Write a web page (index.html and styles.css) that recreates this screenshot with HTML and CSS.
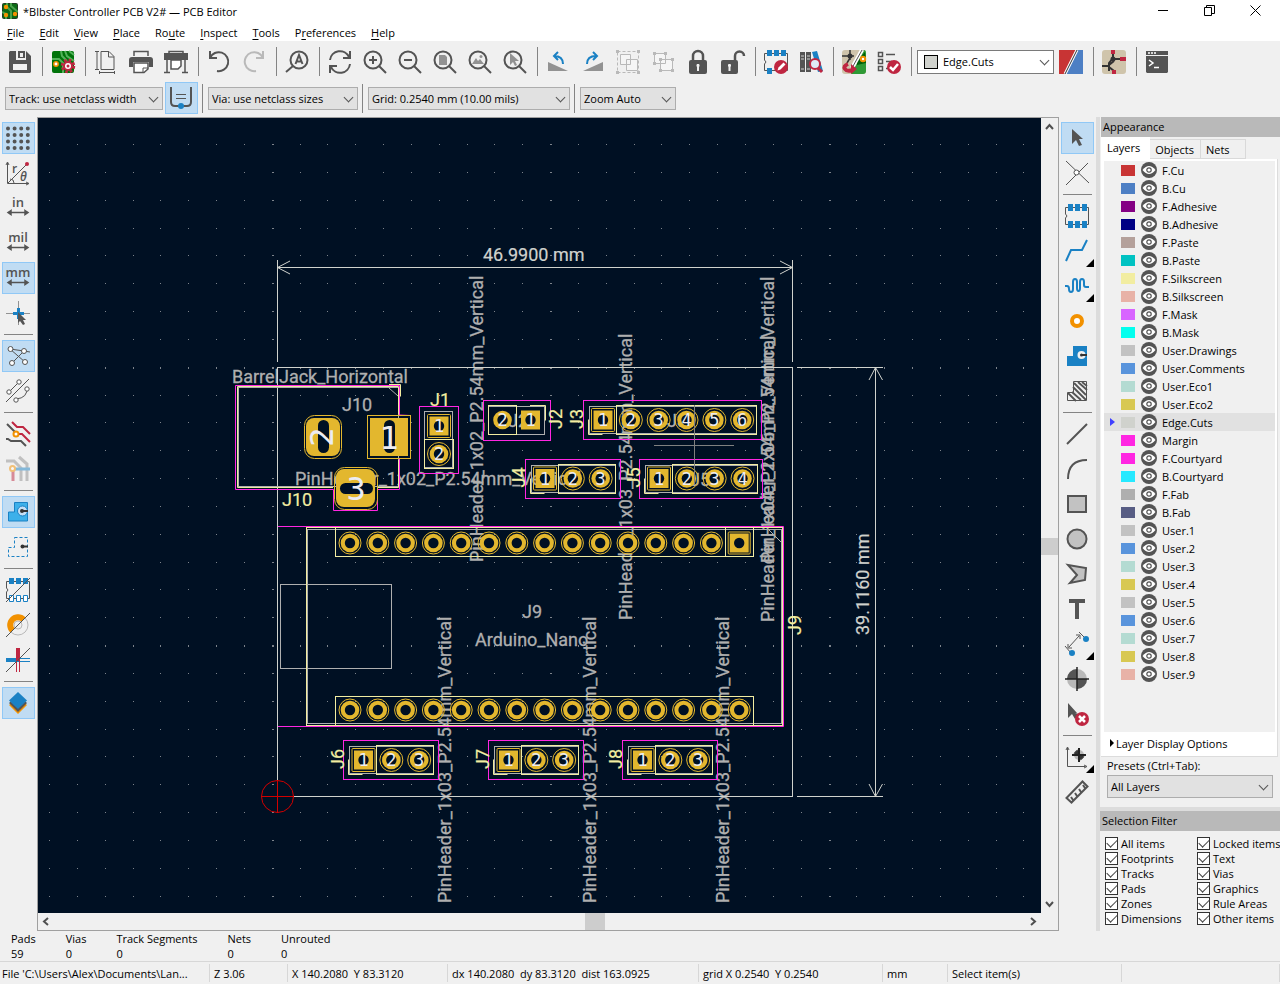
FILE: index.html
```html
<!DOCTYPE html>
<html lang="en">
<head>
  <meta charset="utf-8">
  <title>*Blbster Controller PCB V2# — PCB Editor</title>
  <link rel="stylesheet" href="styles.css">
</head>
<body>
  <header class="titlebar">
    <svg class="app-icon" viewBox="0 0 16 16"><rect width="16" height="16" rx="2" fill="#1f3d22"/><path d="M1 1h14v14H1z" fill="#0b6a14"/><path d="M5 0v4l4 4v8M9 0v3l7 6M0 9l4 2v5" fill="none" stroke="#49a24c" stroke-width="2"/><circle cx="4" cy="4" r="2.2" fill="#f29100"/><circle cx="4" cy="12" r="2.2" fill="#f29100"/><circle cx="13" cy="11" r="2.2" fill="#f29100"/></svg>
    <span class="title">*Blbster Controller PCB V2# — PCB Editor</span>
    <button class="win-btn" aria-label="Minimize"><svg width="11" height="11"><path d="M0 5.500h10" stroke="#000"/></svg></button>
    <button class="win-btn" aria-label="Restore"><svg width="11" height="11" fill="none" stroke="#000"><path d="M.5 2.500h7v8h-7zM2.500 2.500v-2h8v8h-3"/></svg></button>
    <button class="win-btn" aria-label="Close"><svg width="11" height="11" stroke="#000"><path d="M.5.5l10 10M10.500.5l-10 10"/></svg></button>
  </header>

  <nav class="menubar">
    <button><u>F</u>ile</button><button><u>E</u>dit</button><button><u>V</u>iew</button><button><u>P</u>lace</button><button>Ro<u>u</u>te</button><button><u>I</u>nspect</button><button><u>T</u>ools</button><button>P<u>r</u>eferences</button><button><u>H</u>elp</button>
  </nav>

  <div class="toolbar">
    <button class="tool" aria-label="Save"><svg viewBox="0 0 24 24"><path d="M2 1h16l5 5v16l-1 1H2l-1-1V2z" fill="#545454"/><path d="M8 1h10v9H8z" fill="#f0f0f0"/><path d="M10 1h7v7h-7z" fill="#545454"/><path d="M12 3h3v4h-3zM5 14h14v6H5z" fill="#f0f0f0"/></svg></button>
    <span class="sep"></span>
    <button class="tool" aria-label="Board setup"><svg viewBox="0 0 24 24"><rect x="1" y="1" width="22" height="22" rx="2" fill="#00730a"/><path d="M10 1l1 5 5 5M14 1l2 5 7 5M1 9h7l4 4v10M18 1l5 4" fill="none" stroke="#52b35a" stroke-width="2"/><circle cx="5" cy="14" r="2.200" fill="#fff" stroke="#f29100" stroke-width="1.500"/><circle cx="17" cy="16" r="6" fill="none" stroke="#bf2641" stroke-width="2.500" stroke-dasharray="2.700 2"/><circle cx="17" cy="16" r="3.600" fill="#fff" stroke="#bf2641" stroke-width="3"/><circle cx="17" cy="16" r="3" fill="#fff"/><circle cx="17" cy="16" r="1.500" fill="#bf2641"/></svg></button>
    <span class="sep"></span>
    <button class="tool" aria-label="Page settings"><svg viewBox="0 0 24 24" class="line"><path d="M7 1.500h8l5 5v13H7zM14.500 1.500v5.500h5.500M3 2v18M1 1.500h4M1 19.500h4M6 22.500h14M5.500 21v3M20.500 21v3"/></svg></button>
    <button class="tool" aria-label="Print"><svg viewBox="0 0 24 24"><path d="M5 6V1.500h14V6" fill="none" stroke="#545454" stroke-width="1.500"/><path d="M3 7h18q3 0 3 3v7h-4v-5H4v5H0v-7q0-3 3-3z" fill="#545454"/><path d="M5 13h14v6l-4 3.500H5z" fill="#fff" stroke="#545454" stroke-width="1.500"/><path d="M14 22v-4h5" fill="none" stroke="#545454"/></svg></button>
    <button class="tool" aria-label="Plot"><svg viewBox="0 0 24 24"><path d="M5 4V1.500h14V4" fill="none" stroke="#545454" stroke-width="1.500"/><path d="M0 3h24v7H0z" fill="#545454"/><path d="M7 10h10v6l-3 3H7z" fill="#fff" stroke="#545454" stroke-width="1.500"/><path d="M3 10v13M21 10v13M0 22.500h6M18 22.500h6" stroke="#545454" stroke-width="1.500"/></svg></button>
    <span class="sep"></span>
    <button class="tool" aria-label="Undo"><svg viewBox="0 0 24 24" class="bold"><path d="M3 1v7h7M3 8A9.500 9.500 0 1 1 10 21"/></svg></button>
    <button class="tool off" aria-label="Redo"><svg viewBox="0 0 24 24" class="bold"><path d="M21 1v7h-7M21 8A9.500 9.500 0 1 0 14 21"/></svg></button>
    <span class="sep"></span>
    <button class="tool" aria-label="Find"><svg viewBox="0 0 24 24" class="bold"><circle cx="14" cy="10" r="8.500"/><path d="M8 16l-7 6"/><path d="M10.500 14l3.500-9 3.500 9M12 11.500h4"/></svg></button>
    <span class="sep"></span>
    <button class="tool" aria-label="Refresh"><svg viewBox="0 0 24 24" class="bold"><path d="M2 10A10 10 0 0 1 21 7M22 1v7h-7M22 14A10 10 0 0 1 3 17M2 23v-7h7"/></svg></button>
    <button class="tool" aria-label="Zoom in"><svg viewBox="0 0 24 24" class="bold"><circle cx="10" cy="10" r="8.500"/><path d="M16 16l7 7M6 10h8M10 6v8"/></svg></button>
    <button class="tool" aria-label="Zoom out"><svg viewBox="0 0 24 24" class="bold"><circle cx="10" cy="10" r="8.500"/><path d="M16 16l7 7M6 10h8"/></svg></button>
    <button class="tool" aria-label="Zoom to page"><svg viewBox="0 0 24 24" class="bold"><circle cx="10" cy="10" r="8.500"/><path d="M16 16l7 7"/><path d="M6 5h6l2 2v8H6z" fill="#929292" stroke="none"/></svg></button>
    <button class="tool" aria-label="Zoom to objects"><svg viewBox="0 0 24 24" class="bold"><circle cx="10" cy="10" r="8.500"/><path d="M16 16l7 7"/><path d="M4 14l4-6 2 3 2-2 4 5z" fill="#929292" stroke="none"/><circle cx="13" cy="6.500" r="1.500" fill="#929292" stroke="none"/></svg></button>
    <button class="tool" aria-label="Zoom to selection"><svg viewBox="0 0 24 24" class="bold"><circle cx="10" cy="10" r="8.500"/><path d="M16 16l7 7"/><path d="M7 3v12l3-3 2 4 2-1-2-4h4z" fill="#929292" stroke="none"/></svg></button>
    <span class="sep"></span>
    <button class="tool" aria-label="Rotate counterclockwise"><svg viewBox="0 0 24 24"><path d="M2 12v9h20z" fill="#929292"/><path d="M17 14q0-8-9-8M12 2L8 6l4 4" fill="none" stroke="#1a81c4" stroke-width="2"/></svg></button>
    <button class="tool" aria-label="Rotate clockwise"><svg viewBox="0 0 24 24"><path d="M22 12v9H2z" fill="#929292"/><path d="M6 14q0-8 9-8M12 2l4 4-4 4" fill="none" stroke="#1a81c4" stroke-width="2"/></svg></button>
    <button class="tool off" aria-label="Group"><svg viewBox="0 0 24 24" class="line"><path d="M1.500 1.500h21v21h-21z" stroke-dasharray="3 2"/><path d="M4.500 4.500h10v10h-10zM10.500 9.500h11v11h-11z" fill="#fff"/><path d="M0 0h3v3H0zM21 0h3v3h-3zM0 21h3v3H0zM21 21h3v3h-3z" fill="#545454" stroke="none"/></svg></button>
    <button class="tool off" aria-label="Ungroup"><svg viewBox="0 0 24 24" class="line"><path d="M3.500 3.500h11v10h-11zM9.500 9.500h12v11h-12z" fill="#fff"/><path d="M2 2h3v3H2zM13 2h3v3h-3zM2 12h3v3H2zM8 8h3v3H8zM20 8h3v3h-3zM8 19h3v3H8zM20 19h3v3h-3z" fill="#545454" stroke="none"/></svg></button>
    <button class="tool" aria-label="Lock"><svg viewBox="0 0 24 24"><path d="M7 12V6a5 5 0 0 1 10 0v6" fill="none" stroke="#545454" stroke-width="2.500"/><rect x="3" y="10" width="18" height="14" rx="2" fill="#545454"/><path d="M12 14v7M10.500 15.500h3" stroke="#f0f0f0" stroke-width="2"/></svg></button>
    <button class="tool" aria-label="Unlock"><svg viewBox="0 0 24 24"><path d="M14 12V6a4.500 4.500 0 0 1 9 0" fill="none" stroke="#545454" stroke-width="2.500"/><rect x="0" y="10" width="17" height="14" rx="2" fill="#545454"/><path d="M8.500 14v7M7 15.500h3" stroke="#f0f0f0" stroke-width="2"/></svg></button>
    <span class="sep"></span>
    <button class="tool" aria-label="Footprint editor"><svg viewBox="0 0 24 24"><path d="M.5 3.500h23v17H.500V14q3-2 0-4z" fill="none" stroke="#545454"/><path d="M3 0h5v6H3zM10 0h5v6h-5zM17 0h5v6h-5zM3 18h5v6H3z" fill="#1a81c4"/><circle cx="17" cy="17" r="7" fill="#bf2641"/><path d="M13.500 20.500l1-3 5-5 2 2-5 5z" fill="#fff"/></svg></button>
    <button class="tool" aria-label="Footprint library"><svg viewBox="0 0 24 24"><path d="M1 2h5v20H1zM7 2h5v20H7z" fill="#545454"/><path d="M2 6h3M2 9h3M8 6h3M8 9h3M2 19h3M8 19h3" stroke="#d0d0d0"/><path d="M13 2l5-1 6 20-5 1z" fill="#1a81c4"/><circle cx="16" cy="14" r="5" fill="#dfeaf5" stroke="#bf2641" stroke-width="2"/><path d="M19 18l4 4" stroke="#bf2641" stroke-width="3"/></svg></button>
    <span class="sep"></span>
    <button class="tool" aria-label="Update PCB from schematic"><svg viewBox="0 0 24 24"><rect width="24" height="24" rx="3" fill="#cfc4ab"/><path d="M22 0L9 24h12q3 0 3-3V3q0-3-2-3z" fill="#2f9a36"/><path d="M23 2l-8 9v4l9-2z" fill="#00600a"/><path d="M20 0L10 18" stroke="#fff" stroke-width="4"/><path d="M20 0L10 18" stroke="#545454"/><path d="M8 0v10M0 6h12M8 8l-3 5" fill="none" stroke="#333" stroke-width="1.500"/><circle cx="8" cy="6" r="2.500" fill="#333"/><circle cx="21" cy="9" r="2.200" fill="#fff" stroke="#f29100" stroke-width="2"/><path d="M6 14q-5 2-3 5t8 1" fill="none" stroke="#bf2641" stroke-width="4"/><path d="M9 14l6 5-6 5z" fill="#bf2641"/></svg></button>
    <button class="tool" aria-label="Design rules checker"><svg viewBox="0 0 24 24"><path d="M1.500 2.500h4v4h-4zM1.500 9.500h4v4h-4zM1.500 16.500h4v4h-4zM9 4.500h9M9 11.500h6M9 18.500h3" fill="none" stroke="#545454" stroke-width="1.500"/><circle cx="17" cy="17" r="7" fill="#bf2641"/><path d="M13 17l3 3 5-6" fill="none" stroke="#fff" stroke-width="2.500"/></svg></button>
    <span class="sep"></span>
    <span class="select layer-select">
      <i class="current-layer"></i>
      <select aria-label="Active layer"><option>Edge.Cuts</option></select>
    </span>
    <button class="tool" aria-label="Layer pair"><svg viewBox="0 0 24 24"><path d="M0 0h24v24H0z" fill="#4d7fc4"/><path d="M0 0h18L6 24H0z" fill="#c83434"/><path d="M18 0L6 24" stroke="#fff" stroke-width="3"/><path d="M18 0L6 24" stroke="#333"/></svg></button>
    <span class="sep"></span>
    <button class="tool" aria-label="Schematic editor"><svg viewBox="0 0 24 24"><rect width="24" height="24" rx="3" fill="#cfc4ab"/><path d="M11 0v8l-4 5v8M11 9h8M0 16h7M7 15l5-4M7 17l5 4v3" fill="none" stroke="#333" stroke-width="2"/><path d="M9 0h4v4H9zM18 7h6v4h-6zM10 20h4v4h-4z" fill="#bf2641"/><circle cx="11" cy="9" r="2.500" fill="#333"/></svg></button>
    <span class="sep"></span>
    <button class="tool" aria-label="Scripting console"><svg viewBox="0 0 24 24"><path d="M1 1h22v4H1zM1 6h22v16l-1 1H2l-1-1z" fill="#545454"/><path d="M3 3h2M6 3h2M9 3h2M4 10l4 3-4 3M9 17.500h5" fill="none" stroke="#fff" stroke-width="1.500"/></svg></button>
  </div>

  <div class="toolbar options">
    <span class="select track"><select aria-label="Track width"><option>Track: use netclass width</option></select></span>
    <button class="tool on" aria-label="Use existing track width"><svg viewBox="0 0 24 24"><path d="M2 1v15q0 4 4 4h12q4 0 4-4V1" fill="none" stroke="#545454" stroke-width="2"/><path d="M7 8.500h10M7 12.500h10" stroke="#545454"/><circle cx="12" cy="20" r="3" fill="#1a81c4"/></svg></button>
    <span class="sep"></span>
    <span class="select via"><select aria-label="Via size"><option>Via: use netclass sizes</option></select></span>
    <span class="sep"></span>
    <span class="select grid"><select aria-label="Grid"><option>Grid: 0.2540 mm (10.00 mils)</option></select></span>
    <span class="sep"></span>
    <span class="select zoom"><select aria-label="Zoom"><option>Zoom Auto</option></select></span>
  </div>

  <main class="workspace">
    <div class="side-tools">
      <button class="tool on" aria-label="Show grid"><svg viewBox="0 0 24 24"><path d="M2 2.500h21M2 9h21M2 15.500h21M2 22h21" stroke="#545454" stroke-width="4" stroke-linecap="round" stroke-dasharray="0 6.600"/></svg></button>
      <button class="tool" aria-label="Polar coordinates"><svg viewBox="0 0 24 24" class="line"><path d="M1.500 2v20.500h21M0 4l1.500-3L3 4M20 21l3 1.500-3 1.500M2 22L20 4M4 18q4 0 4 4"/><circle cx="21" cy="3" r="2" fill="#bf2641" stroke="none"/><text x="6" y="12" class="glyph">r</text><text x="14" y="20" class="glyph italic">θ</text></svg></button>
      <button class="tool" aria-label="Inches"><svg viewBox="0 0 24 24"><text x="12" y="11" class="unit">in</text><path d="M3 16.500h18M5 14.500l-3 2 3 2zM19 14.500l3 2-3 2z" stroke="#545454" stroke-width="1.500" fill="#545454"/></svg></button>
      <button class="tool" aria-label="Mils"><svg viewBox="0 0 24 24"><text x="12" y="11" class="unit">mil</text><path d="M3 16.500h18M5 14.500l-3 2 3 2zM19 14.500l3 2-3 2z" stroke="#545454" stroke-width="1.500" fill="#545454"/></svg></button>
      <button class="tool on" aria-label="Millimeters"><svg viewBox="0 0 24 24"><text x="12" y="11" class="unit">mm</text><path d="M3 16.500h18M5 14.500l-3 2 3 2zM19 14.500l3 2-3 2z" stroke="#545454" stroke-width="1.500" fill="#545454"/></svg></button>
      <button class="tool" aria-label="Full-window crosshair"><svg viewBox="0 0 24 24"><path d="M0 12.500h24M12.500 0v24" stroke="#929292"/><path d="M12.500 7v11M7 12.500h11" stroke="#1a81c4" stroke-width="3"/><path d="M12 11v11l2-2 3 4 2-1-2-4h3z" fill="#545454"/></svg></button>
      <span class="sep"></span>
      <button class="tool on" aria-label="Show ratsnest"><svg viewBox="0 0 24 24" class="line"><path d="M4 5l14 2 6 1M4 5l15 13M6 19L18 7"/><g fill="#fff"><circle cx="4.500" cy="5" r="2.500"/><circle cx="18" cy="7" r="2.500"/><circle cx="6" cy="19" r="2.500"/><circle cx="19" cy="18" r="2.500"/></g></svg></button>
      <button class="tool" aria-label="Curved ratsnest"><svg viewBox="0 0 24 24" class="line"><path d="M0 23L23 0M3 13l10-10M10 20q12-1 11-12"/><g fill="#fff"><circle cx="3" cy="13" r="2.200"/><circle cx="13" cy="3" r="2.200"/><circle cx="10" cy="21" r="2.200"/><circle cx="21" cy="10" r="2.200"/></g></svg></button>
      <span class="sep"></span>
      <button class="tool" aria-label="Net highlighting"><svg viewBox="0 0 24 24" fill="none" stroke-width="2"><path d="M1 2l8 8M0 17l2 0 3 2h10l5 5" stroke="#545454"/><path d="M6 0l5 5h6l7 7M12 12h4l8 8" stroke="#bf2641"/><circle cx="10" cy="12" r="2.500" fill="#fff" stroke="#f29100"/></svg></button>
      <button class="tool faded" aria-label="Dim inactive nets"><svg viewBox="0 0 24 24" fill="none" stroke-width="3"><path d="M0 4h8l7 7v13M13 0l8 7v17" stroke="#929292"/><path d="M7 12v12" stroke="#bf2641"/><path d="M8 12h16" stroke="#1a81c4"/><circle cx="6.500" cy="11.500" r="2.500" fill="#fff" stroke="#f29100" stroke-width="2"/></svg></button>
      <span class="sep"></span>
      <button class="tool on" aria-label="Show zone fills"><svg viewBox="0 0 24 24"><path d="M8.500 2.500h13v18.500h-19v-9h6z" fill="#3db0ea" stroke="#1a81c4"/><circle cx="16.500" cy="11" r="5" fill="#c4def5" stroke="#1a81c4"/><path d="M16 11h6" stroke="#333" stroke-width="2"/><circle cx="16" cy="11" r="2" fill="#333"/></svg></button>
      <button class="tool" aria-label="Show zone outlines"><svg viewBox="0 0 24 24"><path d="M8.500 2.500h13v19h-19v-9h6z" fill="none" stroke="#1a81c4" stroke-dasharray="3 2"/><path d="M16 11.500h6" stroke="#333" stroke-width="2"/><circle cx="16.500" cy="11.500" r="2" fill="#333"/></svg></button>
      <span class="sep"></span>
      <button class="tool" aria-label="Pads outline mode"><svg viewBox="0 0 24 24"><path d="M.5 3.500h23v17H.500V14q3-2 0-4z" fill="none" stroke="#545454"/><path d="M3 0h5v6H3zM10 0h5v6h-5zM17 0h5v6h-5z" fill="#1a81c4"/><path d="M3.500 17.500h4v6h-4zM10.500 17.500h4v6h-4zM17.500 17.500h4v6h-4z" fill="#fff" stroke="#1a81c4"/><path d="M0 24L24 0" stroke="#545454"/></svg></button>
      <button class="tool" aria-label="Vias outline mode"><svg viewBox="0 0 24 24" fill="none"><circle cx="12" cy="12" r="10" stroke="#b9b9b9"/><circle cx="12" cy="12" r="4" stroke="#b9b9b9"/><path d="M6.500 17.500A7.500 7.500 0 0 1 17.500 6.500" stroke="#f29100" stroke-width="6"/><path d="M0 24L24 0" stroke="#545454"/></svg></button>
      <button class="tool" aria-label="Tracks outline mode"><svg viewBox="0 0 24 24"><path d="M0 12h13" stroke="#1a81c4" stroke-width="4"/><path d="M13 10.500h11M13 13.500h11" stroke="#1a81c4"/><path d="M12 0v13" stroke="#bf2641" stroke-width="4"/><path d="M10.500 13v11M13.500 13v11" stroke="#bf2641"/><path d="M0 24L24 0" stroke="#545454"/></svg></button>
      <span class="sep"></span>
      <button class="tool on" aria-label="Layers manager"><svg viewBox="0 0 24 24"><path d="M3 14l9 9 9-9-9-7z" fill="#f29100"/><path d="M3 12l9 9 9-9-9-8z" fill="#545454"/><path d="M3 9.500L12 1l9 8.500L12 18z" fill="#1a81c4"/></svg></button>
    </div>

    <section class="viewport">
      <svg id="board" class="board" role="img" aria-label="PCB layout"></svg>
      <div class="scroll vertical">
        <svg viewBox="0 0 17 17"><path d="M5 11l3.500-4L12 11"/></svg>
        <span class="before"></span><span class="thumb"></span><span class="after"></span>
        <svg viewBox="0 0 17 17"><path d="M5 6l3.500 4L12 6"/></svg>
      </div>
      <div class="scroll horizontal">
        <svg viewBox="0 0 17 17"><path d="M10 5L6 8.500l4 3.500"/></svg>
        <span class="before"></span><span class="thumb"></span><span class="after"></span>
        <svg viewBox="0 0 17 17"><path d="M7 5l4 3.500L7 12"/></svg>
      </div>
    </section>

    <div class="side-tools right">
      <button class="tool on" aria-label="Select"><svg viewBox="0 0 24 24"><path d="M7 3v15l4-4 3 6 3-1-3-6h4z" fill="#545454"/></svg></button>
      <button class="tool" aria-label="Local ratsnest"><svg viewBox="0 0 24 24" class="line"><path d="M1 0l23 22M23 2L1 24"/><circle cx="11.500" cy="11.500" r="2.500" fill="#fff"/></svg></button>
      <span class="sep"></span>
      <button class="tool" aria-label="Add footprint"><svg viewBox="0 0 24 24"><path d="M.5 3.500h23v17H.500V14q3-2 0-4z" fill="none" stroke="#545454"/><path d="M3 0h5v7H3zM10 0h5v7h-5zM17 0h5v7h-5zM3 17h5v7H3zM10 17h5v7h-5zM17 17h5v7h-5z" fill="#1a81c4"/></svg></button>
      <button class="tool more" aria-label="Route tracks"><svg viewBox="0 0 24 24"><path d="M1 22l5-11h11l5-10" fill="none" stroke="#1a81c4" stroke-width="2"/></svg></button>
      <button class="tool more" aria-label="Tune length"><svg viewBox="0 0 24 24"><path d="M0 12h2q2 0 2 3t2 3 2-3V8q0-3 2-3t2 3v6q0 3 1.500 3t1.500-3V8q0-3 2-3t2 3v3q0 2 2 2h3" fill="none" stroke="#1a81c4" stroke-width="2"/></svg></button>
      <button class="tool" aria-label="Add via"><svg viewBox="0 0 24 24"><circle cx="12" cy="12" r="5" fill="#fff" stroke="#f29100" stroke-width="4"/></svg></button>
      <button class="tool" aria-label="Add filled zone"><svg viewBox="0 0 24 24"><path d="M8 2h14v20H2V12h6z" fill="#1a81c4"/><circle cx="16.500" cy="11" r="4" fill="#f0f0f0"/><path d="M16 11h6" stroke="#333" stroke-width="2"/><circle cx="16.500" cy="11" r="1.500" fill="#333"/></svg></button>
      <button class="tool" aria-label="Add rule area"><svg viewBox="0 0 24 24" class="line"><path d="M8.500 2.500h13v19h-19v-8h6z"/><path d="M9 4l12 12M13 3l9 8M17 3l5 4M8 8l13 13M7 13l9 8M3 14l8 8" stroke-width="1.800"/></svg></button>
      <span class="sep"></span>
      <button class="tool" aria-label="Draw line"><svg viewBox="0 0 24 24" class="bold"><path d="M2 22L22 2"/></svg></button>
      <button class="tool" aria-label="Draw arc"><svg viewBox="0 0 24 24" class="bold"><path d="M3 22Q3 3 22 3"/></svg></button>
      <button class="tool" aria-label="Draw rectangle"><svg viewBox="0 0 24 24" class="bold"><path d="M3 4h18v16H3z" fill="#c2c2c2"/></svg></button>
      <button class="tool" aria-label="Draw circle"><svg viewBox="0 0 24 24" class="bold"><circle cx="12" cy="12" r="9.500" fill="#c2c2c2"/></svg></button>
      <button class="tool" aria-label="Draw polygon"><svg viewBox="0 0 24 24" class="bold"><path d="M3 3l18 3-1 12-15 3 7-8z" fill="#c2c2c2"/></svg></button>
      <button class="tool" aria-label="Add text"><svg viewBox="0 0 24 24"><path d="M4 2h16v4h-6v16h-4V6H4z" fill="#545454"/></svg></button>
      <button class="tool more" aria-label="Add dimension"><svg viewBox="0 0 24 24" class="line"><path d="M4 15L14 4M3 12v4h4M11 3h4v4M0 14l6 7M14 0l7 7"/><circle cx="7" cy="21" r="3" fill="#1a81c4" stroke="none"/><circle cx="21" cy="7" r="3" fill="#1a81c4" stroke="none"/></svg></button>
      <button class="tool" aria-label="Layer alignment target"><svg viewBox="0 0 24 24"><circle cx="12" cy="12" r="10" fill="#b9b9b9"/><path d="M12 12V2A10 10 0 0 0 2 12zM12 2a10 10 0 0 1 0 0zM12 12v10a10 10 0 0 0 10-10z" fill="#545454"/><path d="M12 0v24M0 12h24" stroke="#222" stroke-width="1.500"/></svg></button>
      <button class="tool" aria-label="Delete"><svg viewBox="0 0 24 24"><path d="M3 1v15l4-4 3 5 4-5-4-1h2z" fill="#545454"/><circle cx="17" cy="17" r="7" fill="#bf2641"/><path d="M14 14l6 6M20 14l-6 6" stroke="#fff" stroke-width="2.500"/></svg></button>
      <span class="sep"></span>
      <button class="tool more" aria-label="Set grid origin"><svg viewBox="0 0 24 24" class="line"><path d="M2.500 3v18.500h18M1 5l1.500-3L4 5M19 20l3 1.500-3 1.500"/><circle cx="14" cy="10" r="5" fill="#b9b9b9" stroke="none"/><path d="M14 10V5a5 5 0 0 0-5 5zM14 10v5a5 5 0 0 0 5-5z" fill="#333"/><path d="M14 3v14M7 10h14" stroke="#222" stroke-width="2"/></svg></button>
      <button class="tool" aria-label="Measure"><svg viewBox="0 0 24 24" class="bold"><path d="M1.500 18L17.500 1.500l5 5L6.500 22.500zM8 20l-2-3M12 16l-2-3M16 12l-2-3M20 8l-2-3"/></svg></button>
    </div>

    <aside class="panels">
      <section class="appearance">
        <h2>Appearance</h2>
        <div class="tabs" role="tablist">
          <button role="tab" class="active">Layers</button><button role="tab">Objects</button><button role="tab">Nets</button>
        </div>
        <div class="tab-page">
          <ul id="layers" class="layers"></ul>
          <button class="display-options">Layer Display Options</button>
        </div>
        <div class="presets">
          <label for="preset">Presets (Ctrl+Tab):</label>
          <span class="select"><select id="preset"><option>All Layers</option></select></span>
        </div>
      </section>
      <section class="filter">
        <h2>Selection Filter</h2>
        <div class="filter-items">
          <label><input type="checkbox" checked>All items</label>
          <label><input type="checkbox" checked>Locked items</label>
          <label><input type="checkbox" checked>Footprints</label>
          <label><input type="checkbox" checked>Text</label>
          <label><input type="checkbox" checked>Tracks</label>
          <label><input type="checkbox" checked>Vias</label>
          <label><input type="checkbox" checked>Pads</label>
          <label><input type="checkbox" checked>Graphics</label>
          <label><input type="checkbox" checked>Zones</label>
          <label><input type="checkbox" checked>Rule Areas</label>
          <label><input type="checkbox" checked>Dimensions</label>
          <label><input type="checkbox" checked>Other items</label>
        </div>
      </section>
    </aside>
  </main>

  <dl class="counts">
    <div><dt>Pads</dt><dd>59</dd></div>
    <div><dt>Vias</dt><dd>0</dd></div>
    <div><dt>Track Segments</dt><dd>0</dd></div>
    <div><dt>Nets</dt><dd>0</dd></div>
    <div><dt>Unrouted</dt><dd>0</dd></div>
  </dl>

  <footer class="statusbar">
    <span>File 'C:\Users\Alex\Documents\Lan...</span>
    <span>Z 3.06</span>
    <span>X 140.2080  Y 83.3120</span>
    <span>dx 140.2080  dy 83.3120  dist 163.0925</span>
    <span>grid X 0.2540  Y 0.2540</span>
    <span>mm</span>
    <span>Select item(s)</span>
    <span></span>
  </footer>

  <script src="script.js"></script>
</body>
</html>
```

FILE: styles.css
```css
* {
  box-sizing: border-box;
}
body {
  margin: 0;
  height: 100vh;
  display: flex;
  flex-direction: column;
  overflow: hidden;
  background: #f0f0f0;
  color: #000;
  font: 11px/15px "Open Sans", "Noto Sans", sans-serif;
}
button,
select {
  font: inherit;
  color: inherit;
}
button {
  border: 0;
  padding: 0;
  background: none;
}

/* title bar and menu */
.titlebar {
  display: flex;
  align-items: center;
  height: 24px;
  padding: 0 2px 2px;
  background: #fff;
}
.app-icon {
  width: 16px;
  height: 16px;
}
.title {
  flex: 1;
  padding-left: 5px;
}
.win-btn {
  width: 46px;
  height: 20px;
}
.menubar {
  display: flex;
  gap: 15px;
  height: 17px;
  padding: 0 7px;
  background: #fff;
}
.menubar u {
  text-underline-offset: 2px;
}

/* toolbars */
.toolbar {
  display: flex;
  align-items: center;
  height: 41px;
  padding-left: 3px;
}
.tool {
  position: relative;
  flex: none;
  display: flex;
  align-items: center;
  justify-content: center;
  width: 33px;
  height: 32px;
  margin: 1px;
  padding-right: 1px;
  border: 1px solid transparent;
}
.tool svg {
  width: 24px;
  height: 24px;
  overflow: visible;
}
.tool.on {
  background: #c0dcf3;
  border-color: #90c8f6;
}
.tool.off {
  opacity: 0.35;
}
.tool.faded {
  opacity: 0.5;
}
.tool.more::after {
  content: "";
  position: absolute;
  right: -1px;
  bottom: -1px;
  border: 4px solid #000;
  border-top-color: transparent;
  border-left-color: transparent;
}
.line {
  fill: none;
  stroke: #545454;
}
.bold {
  fill: none;
  stroke: #545454;
  stroke-width: 2;
}
.unit {
  font: 600 13px "Open Sans", sans-serif;
  fill: #545454;
  text-anchor: middle;
}
.glyph {
  font: 600 12px "Open Sans", sans-serif;
  fill: #545454;
  stroke: none;
}
.italic {
  font-style: italic;
}
.sep {
  flex: none;
  width: 8px;
  height: 29px;
  border-left: 1px solid #848484;
  margin-left: 4px;
  margin-right: -4px;
}
.options {
  height: 35px;
  padding: 0 0 3px 5px;
}
.options .tool {
  margin: 0 0 0 2px;
}
.options .sep {
  width: 6px;
  margin-right: 0;
}
.select {
  position: relative;
  display: inline-flex;
  align-items: center;
  height: 23px;
  border: 1px solid #adadad;
  background: #e1e1e1;
}
.select select {
  appearance: none;
  width: 100%;
  height: 100%;
  padding: 0 20px 0 3px;
  border: 0;
  background: none;
}
.select::after {
  content: "";
  position: absolute;
  right: 5px;
  top: 6px;
  width: 6px;
  height: 6px;
  border: solid #555;
  border-width: 0 1px 1px 0;
  transform: rotate(45deg);
  pointer-events: none;
}
.track { width: 158px; }
.via { width: 150px; }
.grid { width: 202px; }
.zoom { width: 96px; }
.layer-select {
  width: 137px;
  height: 24px;
  margin-left: 2px;
  padding-left: 6px;
  border-color: #7a7a7a;
  background: #fff;
}
.layer-select select {
  padding-left: 5px;
}
.current-layer {
  flex: none;
  width: 14px;
  height: 14px;
  border: 1px solid #000;
  background: #d0d2cd;
}

/* workspace */
.workspace {
  flex: 1;
  display: flex;
  min-height: 0;
}
.side-tools {
  display: flex;
  flex-direction: column;
  align-items: center;
  width: 37px;
  padding-top: 3px;
}
.side-tools .tool {
  margin: 2px 0 1px;
}
.side-tools .sep {
  width: 29px;
  height: 8px;
  margin: 4px 0 -4px;
  border-left: 0;
  border-top: 1px solid #848484;
}
.viewport {
  flex: 1;
  display: grid;
  grid-template: minmax(0, 1fr) 17px / minmax(0, 1fr) 17px;
  border: 1px solid #a0a0a0;
}
.board {
  width: 100%;
  height: 100%;
  background: #001023;
}
.scroll {
  display: flex;
}
.scroll svg {
  width: 17px;
  height: 17px;
  fill: none;
  stroke: #505050;
  stroke-width: 2;
}
.vertical {
  flex-direction: column;
}
.thumb {
  flex: none;
  width: 17px;
  height: 17px;
  background: #cdcdcd;
}
.horizontal .thumb {
  width: 20px;
}
.vertical .before { flex: 403; }
.vertical .after { flex: 341; }
.horizontal .before { flex: 530; }
.horizontal .after { flex: 419; }

/* board drawing */
.board text {
  font: 18px Roboto, "DejaVu Sans", sans-serif;
}
.board .fab { fill: none; stroke: #afafaf; }
.board .silk { fill: none; stroke: #f2eda1; }
.board .court { fill: none; stroke: #ff26e2; }
.board .edge { fill: none; stroke: #d0d2cd; }
.board .cursor { stroke: #808080; }
.board .origin { fill: none; stroke: #d20000; }
.board text.fab { fill: #afafaf; stroke: #afafaf; stroke-width: 0.3; }
.board text.silk { fill: #f2eda1; stroke: #f2eda1; stroke-width: 0.2; }
.board text.edge { fill: #d0d2cd; stroke: #d0d2cd; stroke-width: 0.2; }
.board .pad { fill: #e3b72e; }
.board .ring { fill: none; stroke: #e3b72e; }
.board .hole { fill: #001023; }
.board .dot { fill: #7d838b; }
.board text.num {
  font: 17px "DejaVu Sans Mono", monospace;
  fill: #ececf2;
  text-anchor: middle;
}
.board text.big {
  font-size: 32px;
}

/* panels */
.panels {
  width: 184px;
  display: flex;
  flex-direction: column;
  border-left: 4px solid #dcdcdc;
}
.panels h2 {
  margin: 0;
  height: 20px;
  padding: 2px 2px 0;
  background: #b9b9b9;
  font-size: 11px;
  font-weight: normal;
}
.appearance {
  flex: 1;
  display: flex;
  flex-direction: column;
  padding-left: 1px;
  border-bottom: 4px solid #dcdcdc;
}
.tabs {
  display: flex;
  align-items: flex-end;
  height: 22px;
}
.tabs button {
  height: 20px;
  padding: 0 6px 0 5px;
  border: 1px solid #d9d9d9;
  border-left: 0;
}
.tabs .active {
  height: 22px;
  padding: 0 9px 2px 6px;
  border-color: #fff;
  background: #fff;
}
.tabs button:last-child {
  padding-right: 15px;
}
.tab-page {
  flex: 1;
  display: flex;
  flex-direction: column;
  margin-right: 2px;
  padding: 2px 2px 0 3px;
  border-right: 1px solid #dcdcdc;
  border-bottom: 1px solid #dcdcdc;
  background: #fff;
}
.layers {
  flex: 1;
  margin: 0;
  padding: 0;
  list-style: none;
  background: #f0f0f0;
}
.layers li {
  display: flex;
  align-items: center;
  height: 18px;
}
.layers li.current {
  background: #e1e1e1;
}
.marker {
  width: 17px;
  padding-left: 6px;
}
.current .marker::before {
  content: "";
  display: block;
  width: 0;
  border: solid transparent;
  border-width: 4px 0 4px 5px;
  border-left-color: #4040ff;
}
.swatch {
  width: 14px;
  height: 11px;
}
.eye {
  width: 16px;
  height: 16px;
  margin: 0 5px 0 6px;
}
.eye svg {
  display: block;
}
.display-options {
  display: flex;
  align-items: center;
  gap: 2px;
  height: 24px;
  padding: 0 0 2px 6px;
}
.display-options::before {
  content: "";
  border: solid transparent;
  border-width: 4px 0 4px 4px;
  border-left-color: #000;
}
.presets {
  height: 50px;
  padding: 1px 7px 0 6px;
}
.presets label {
  display: block;
  height: 17px;
}
.presets .select {
  width: 100%;
}
.filter {
  height: 120px;
}
.filter-items {
  display: grid;
  grid-template-columns: 92px 1fr;
  padding: 5px 0 0 5px;
}
.filter-items label {
  display: flex;
  align-items: center;
  gap: 3px;
  height: 15px;
  white-space: nowrap;
}
.filter-items input {
  appearance: none;
  flex: none;
  display: grid;
  place-content: center;
  width: 13px;
  height: 13px;
  margin: 0;
  border: 1px solid #333;
  background: #fff;
}
.filter-items input:checked::before {
  content: "";
  width: 9px;
  height: 5px;
  margin-top: -3px;
  border: solid #444;
  border-width: 0 0 1px 1px;
  transform: rotate(-45deg);
}

/* message panel and status bar */
.counts {
  display: flex;
  height: 30px;
  margin: 0;
  padding-left: 11px;
}
.counts div {
  margin-right: 30px;
}
.counts dd {
  margin: 0;
}
.statusbar {
  display: grid;
  grid-template-columns: 210px 78px 160px 251px 184px 65px 174px 1fr;
  height: 23px;
  border-top: 1px solid #d7d7d7;
}
.statusbar span {
  margin: 2px 0;
  padding: 2px 4px 0;
  border-right: 1px solid #d7d7d7;
  overflow: hidden;
  white-space: pre;
}
.statusbar span:first-child {
  padding-left: 2px;
}
```

FILE: script.js
```js
// layer list
var layers = [
  ["F.Cu", "#c83434"], ["B.Cu", "#4d7fc4"], ["F.Adhesive", "#840084"], ["B.Adhesive", "#000084"],
  ["F.Paste", "#b4a09a"], ["B.Paste", "#00c2c2"], ["F.Silkscreen", "#f2eda1"], ["B.Silkscreen", "#e8b2a7"],
  ["F.Mask", "#d864ff"], ["B.Mask", "#02ffee"], ["User.Drawings", "#c2c2c2"], ["User.Comments", "#5994dc"],
  ["User.Eco1", "#b4dbd2"], ["User.Eco2", "#d8c852"], ["Edge.Cuts", "#d0d2cd"], ["Margin", "#ff26e2"],
  ["F.Courtyard", "#ff26e2"], ["B.Courtyard", "#26e9ff"], ["F.Fab", "#afafaf"], ["B.Fab", "#585d84"],
  ["User.1", "#c2c2c2"], ["User.2", "#5994dc"], ["User.3", "#b4dbd2"], ["User.4", "#d8c852"],
  ["User.5", "#c2c2c2"], ["User.6", "#5994dc"], ["User.7", "#b4dbd2"], ["User.8", "#d8c852"],
  ["User.9", "#e8b2a7"]
];
var eye = '<svg width="16" height="16"><circle cx="8" cy="8" r="8" fill="#545454"/>' +
  '<path d="M1.500 8q6.500-8 13 0q-6.500 8-13 0z" fill="#fff"/>' +
  '<circle cx="8" cy="8" r="2.2" fill="#fff" stroke="#545454" stroke-width="1.2"/></svg>';

document.getElementById("layers").innerHTML = layers.map(function(l) {
  return '<li' + (l[0] === "Edge.Cuts" ? ' class="current"' : "") + '><span class="marker"></span>' +
    '<span class="swatch" style="background:' + l[1] + '"></span>' +
    '<button class="eye" aria-label="Toggle ' + l[0] + '">' + eye + "</button>" + l[0] + "</li>";
}).join("");

// board, in window coordinates shifted by the canvas corner
var out = [];
var pads = [];
var PITCH = 27.84;

function box(cls, x1, y1, x2, y2, r) {
  return '<rect class="' + cls + '" x="' + x1 + '" y="' + y1 + '" width="' + (x2 - x1) +
    '" height="' + (y2 - y1) + '" rx="' + (r || 0) + '"/>';
}
function path(cls, d) {
  out.push('<path class="' + cls + '" d="' + d + '"/>');
}
function text(cls, x, y, s, up) {
  return '<text class="' + cls + '" transform="translate(' + x + "," + y + ")" +
    (up ? " rotate(-90)" : "") + '">' + s + "</text>";
}
function circle(cls, x, y, r) {
  return '<circle class="' + cls + '" cx="' + x + '" cy="' + y + '" r="' + r + '"/>';
}
function pad(x, y, n, ring) {
  if (n === 1) {
    if (ring) pads.push(box("ring", x - ring, y - ring, x + ring, y + ring, 1));
    pads.push(box("pad", x - 9.5, y - 9.5, x + 9.5, y + 9.5));
  } else {
    if (ring) pads.push(circle("ring", x, y, ring));
    pads.push(circle("pad", x, y, 9.3));
  }
  pads.push(circle("hole", x, y, 5.2));
}
function num(x, y, n) {
  pads.push(text("num", x, y + 6, n));
}

// grid dots
for (var i = 0; i < 60; i++) {
  for (var j = 0; j < 40; j++) {
    out.push('<rect class="dot" x="' + Math.round(49 + i * PITCH) + '" y="' + Math.round(144 + j * PITCH) +
      '" width="' + (i % 10 === 8 ? 2 : 1) + '" height="' + (j % 10 === 8 ? 2 : 1) + '"/>');
  }
}

// fab values
[[483, 562, "02"], [632, 620, "03"], [774, 563, "06"], [774, 622, "04"],
 [451, 903, "03"], [596, 903, "03"], [729, 903, "03"]].forEach(function(t) {
  out.push(text("fab", t[0], t[1], "PinHeader_1x" + t[2] + "_P2.54mm_Vertical", true));
});
out.push(text("fab", 295, 485, "PinHeader_1x02_P2.54mm_Vertical"));
out.push(text("fab", 232, 383, "BarrelJack_Horizontal"));
out.push(text("fab", 342, 411, "J10"));
out.push(text("fab", 508, 427, "J2"));
out.push(text("fab", 667, 427, "J3"));
out.push(text("fab", 690, 486, "J5"));
out.push(text("fab", 522, 618, "J9"));
out.push(text("fab", 475, 646, "Arduino_Nano"));

// edge cuts and dimensions
out.push(box("edge", 277.5, 367.5, 792.5, 796.5));
path("edge", "M277.5 260v102M792.5 260v102M277.5 267.500h515M290 261l-12.500 6.500 12.500 6.500M780 261l12.500 6.500-12.500 6.500");
path("edge", "M797 367.500h86M797 796.500h86M875.500 367.500v429M869 380l6.500-12.500 7 12.500M869 784l6.500 12.500 7-12.500");
out.push(text("edge", 483, 261, "46.9900 mm"));
out.push(text("edge", 869, 635, "39.1160 mm", true));

// J10 barrel jack
out.push(box("fab", 238.5, 387.5, 398.5, 486.5));
path("fab", "M389 388l9 8");
path("silk", "M333 487.500H237.500v-101h161v28M398.500 460v27.500H378M389 384.500h11.500v12");
path("court", "M399.500 415v-29.500h-164v104h98v21h44v-21h22v-31h11v-43z");
out.push(text("silk", 282, 506, "J10"));
pads.push(box("ring", 304.5, 415.5, 341.5, 458.5, 10), box("pad", 306, 418, 340, 456, 8), box("hole", 318, 420, 329, 453, 5.5));
pads.push(box("ring", 367.5, 415.5, 410.5, 458.5), box("pad", 370, 418, 408, 456), box("hole", 384, 420, 395, 453, 5.5));
pads.push(box("ring", 334.5, 467.5, 377.5, 509.5, 10), box("pad", 336, 469, 375, 507, 8), box("hole", 340, 483, 373, 494, 5.5));
pads.push(text("num big", 333, 437, "2", true), text("num big", 389, 449, "1"), text("num big", 356, 500, "3"));

// J1
out.push(box("court", 419.5, 406.5, 458.5, 473.5), box("fab", 424.5, 411.5, 452.5, 467.5));
out.push(box("silk", 424.5, 439.5, 453.5, 468.5), text("silk", 430, 406, "J1"));
pad(439, 426, 1, 11.5);
pad(439, 454, 2, 11.5);
num(439, 426, 1);
num(439, 454, 2);

// J2, pin 1 on the right
out.push(box("court", 483.5, 400.5, 550.5, 440.5), box("fab", 488.5, 406.5, 544.5, 434.5));
out.push(box("silk", 488.5, 405.5, 516.5, 434.5), text("silk", 562, 429, "J2", true));
path("silk", "M530 405.500h15.500v15");
pad(502.5, 420, 2);
pad(530.5, 420, 1);
num(502.5, 420, 2);
num(530.5, 420, 1);

// single row headers: name, first pad, row, pins, label baseline
[["J3", 603, 420, 6, 583], ["J4", 545, 478.5, 3, 525], ["J5", 659, 478.5, 4, 640],
 ["J6", 363.5, 760, 3, 344], ["J7", 508.5, 760, 3, 489], ["J8", 642.5, 760, 3, 622]].forEach(function(h) {
  var x = Math.floor(h[1]) + 0.5;
  var top = Math.round(h[2]) - 0.5;
  var right = Math.floor(x + (h[3] - 1) * PITCH) + 0.5;
  out.push(box("court", x - 20, top - 19, right + 19, top + 20));
  out.push(box("fab", x - 14, top - 13, right + 14, top + 14));
  out.push(box("silk", x + 13, top - 14, right + 14, top + 15));
  path("silk", "M" + (x - 15) + " " + top + "v15h14");
  out.push(text("silk", h[4], h[2] + 9, h[0], true));
  for (var n = 1; n <= h[3]; n++) pad(h[1] + (n - 1) * PITCH, h[2], n, 11.5);
  for (n = 1; n <= h[3]; n++) num(h[1] + (n - 1) * PITCH, h[2], n);
});

// J9 Arduino Nano
out.push(box("fab", 307.5, 529.5, 781.5, 723.5), box("fab", 280.5, 584.5, 391.5, 668.5));
path("fab", "M768 529l13 13");
out.push(box("silk", 306.5, 527.5, 782.5, 725.5), box("silk", 335.5, 527.5, 753.5, 556.5), box("silk", 335.5, 696.5, 753.5, 725.5));
path("silk", "M725.500 527v29");
path("court", "M278 526.500h505.500v200H278");
out.push(text("silk", 801, 635, "J9", true));
for (i = 0; i < 15; i++) {
  pad(350 + i * 27.8, 543, i === 14 ? 1 : 2, 11);
  pad(350 + i * 27.8, 710, 2, 11);
}

pads.push('<path class="cursor" d="M694.500 405v80M654 445.500h80"/>');
pads.push(circle("origin", 277.5, 796.5, 16), '<path class="origin" d="M261 796.500h33M277.500 780v33"/>');

document.getElementById("board").innerHTML =
  '<g transform="translate(-38,-118)">' + out.join("") + pads.join("") + "</g>";
```
